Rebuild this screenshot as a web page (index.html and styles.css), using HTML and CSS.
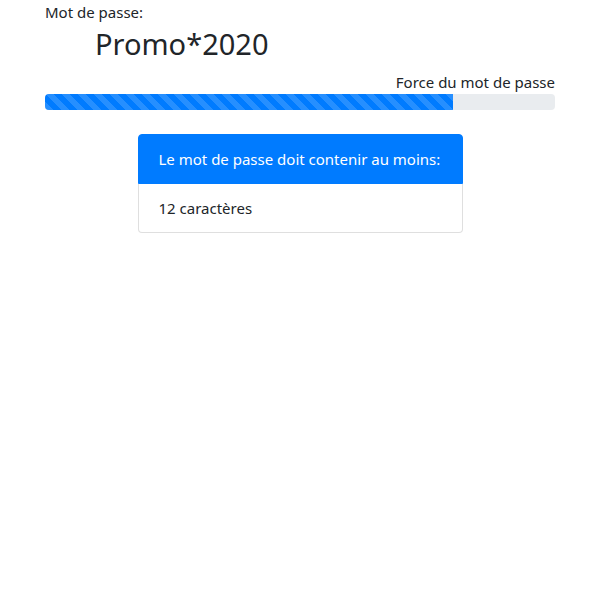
FILE: index.html
```html
<!DOCTYPE html>
<html lang="fr">
<head>
<meta charset="utf-8">
<title>Mot de passe</title>
<link rel="stylesheet" href="styles.css">
</head>
<body>
<div class="container">
  <label class="label">Mot de passe:</label>
  <div class="password">Promo*2020</div>
  <div class="strength-label">Force du mot de passe</div>
  <div class="progress">
    <div class="progress-bar" style="width: 80%"></div>
  </div>
  <ul class="list-group">
    <li class="list-group-item active">Le mot de passe doit contenir au moins:</li>
    <li class="list-group-item">12 caractères</li>
  </ul>
</div>
</body>
</html>
```
FILE: styles.css
```css
* { box-sizing: border-box; }
html, body { margin: 0; padding: 0; background: #fff; }
body {
  font-family: "Noto Sans", "Open Sans", sans-serif;
  font-size: 15px;
  line-height: 24px;
  color: #212529;
}
.container {
  width: 510px;
  margin: 0 auto;
}
.label { display: block; }
.password {
  font-size: 29px;
  line-height: 40px;
  margin: 0 0 6px 50px;
}
.strength-label { text-align: right; }
.progress {
  height: 16px;
  background: #e9ecef;
  border-radius: 4px;
  overflow: hidden;
  display: flex;
}
.progress-bar {
  background-color: #007bff;
  background-image: linear-gradient(45deg, rgba(255,255,255,.15) 25%, transparent 25%, transparent 50%, rgba(255,255,255,.15) 50%, rgba(255,255,255,.15) 75%, transparent 75%, transparent);
  background-size: 16px 16px;
}
.list-group {
  list-style: none;
  margin: 24px auto 0;
  padding: 0;
  width: 325px;
}
.list-group-item {
  padding: 12px 20px;
  border: 1px solid rgba(0,0,0,.125);
  background: #fff;
}
.list-group-item + .list-group-item { border-top: 0; }
.list-group-item:first-child { border-radius: 4px 4px 0 0; }
.list-group-item:last-child { border-radius: 0 0 4px 4px; }
.list-group-item.active {
  background: #007bff;
  border-color: #007bff;
  color: #fff;
}
```
